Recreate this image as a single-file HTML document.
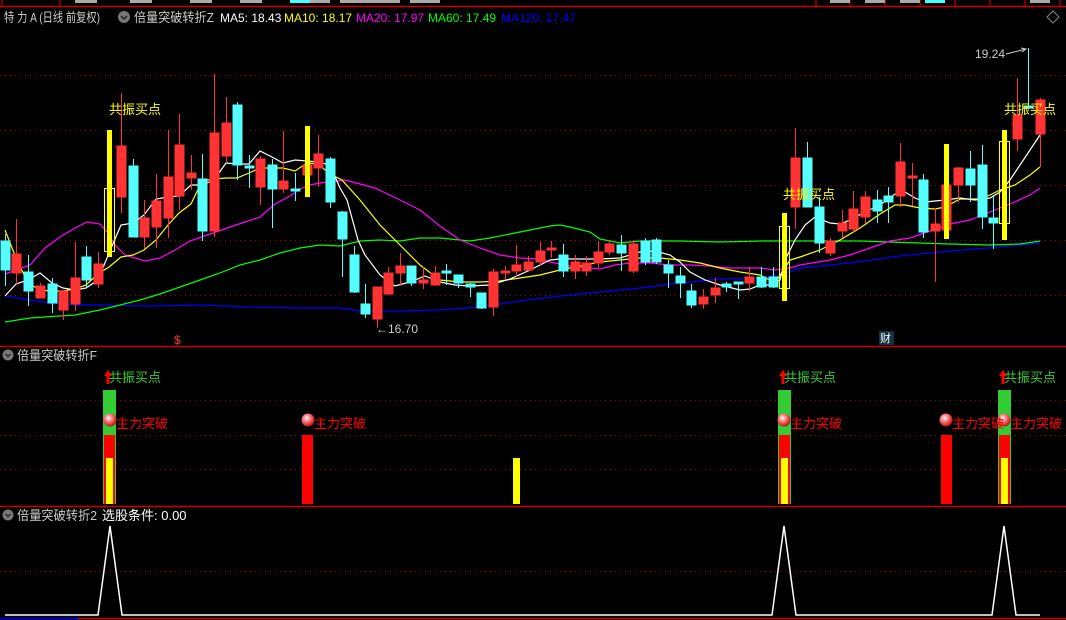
<!DOCTYPE html>
<html><head><meta charset="utf-8"><style>
html,body{margin:0;padding:0;background:#000;width:1066px;height:620px;overflow:hidden}
svg{display:block}
text{font-family:"Liberation Sans","Noto Sans CJK SC",sans-serif}
</style></head><body>
<svg width="1066" height="620" viewBox="0 0 1066 620" xmlns="http://www.w3.org/2000/svg">
<rect width="1066" height="620" fill="#000"/>
<line x1="0" y1="6.5" x2="1066" y2="6.5" stroke="#c00" stroke-width="1.5"/>
<g stroke="#c00" stroke-width="1.2">
<line x1="2" y1="0" x2="2" y2="6"/><line x1="60" y1="0" x2="60" y2="6"/>
<line x1="816" y1="0" x2="816" y2="6"/><line x1="850" y1="0" x2="850" y2="6"/><line x1="885" y1="0" x2="885" y2="6"/><line x1="920" y1="0" x2="920" y2="6"/><line x1="955" y1="0" x2="955" y2="6"/><line x1="990" y1="0" x2="990" y2="6"/><line x1="1025" y1="0" x2="1025" y2="6"/><line x1="1060" y1="0" x2="1060" y2="6"/>
</g>
<g fill="#aaa"><rect x="75" y="0" width="22" height="3"/><rect x="130" y="0" width="22" height="3"/><rect x="190" y="0" width="22" height="3"/><rect x="240" y="0" width="22" height="3"/><rect x="300" y="0" width="30" height="3"/><rect x="340" y="0" width="60" height="3"/><rect x="410" y="0" width="30" height="3"/><rect x="830" y="0" width="20" height="3"/><rect x="865" y="0" width="20" height="3"/><rect x="900" y="0" width="20" height="3"/><rect x="1030" y="0" width="20" height="3"/></g>
<rect x="290" y="0" width="20" height="3" fill="#4ff"/><rect x="925" y="0" width="20" height="3" fill="#4ff"/>

<text x="4" y="22" font-size="13" fill="#ccc" textLength="96" lengthAdjust="spacingAndGlyphs">特 力 A (日线 前复权)</text>
<circle cx="124" cy="17" r="6" fill="#777"/><path d="M121 16l3 3 3-3" stroke="#222" stroke-width="1.5" fill="none"/>
<text x="134" y="22" font-size="13" fill="#ccc" textLength="80" lengthAdjust="spacingAndGlyphs">倍量突破转折Z</text>
<text x="220" y="22" font-size="12" fill="#fff">MA5: 18.43</text>
<text x="284" y="22" font-size="12" fill="#ff0">MA10: 18.17</text>
<text x="356" y="22" font-size="12" fill="#f0f">MA20: 17.97</text>
<text x="428" y="22" font-size="12" fill="#0f0">MA60: 17.49</text>
<text x="501" y="22" font-size="12" fill="#00f">MA120: 17.47</text>
<path d="M1053 11l6 6-6 6-6-6z" stroke="#888" fill="none"/>

<g stroke="#a00" stroke-dasharray="1,4" stroke-width="1">
<line x1="0" y1="75.5" x2="1066" y2="75.5"/><line x1="0" y1="130.5" x2="1066" y2="130.5"/><line x1="0" y1="185.5" x2="1066" y2="185.5"/><line x1="0" y1="240.5" x2="1066" y2="240.5"/><line x1="0" y1="295.5" x2="1066" y2="295.5"/>
<line x1="0" y1="400.5" x2="1066" y2="400.5"/><line x1="0" y1="435.5" x2="1066" y2="435.5"/><line x1="0" y1="469.5" x2="1066" y2="469.5"/>
<line x1="0" y1="571.5" x2="1066" y2="571.5"/>
</g>
<line x1="0" y1="346.5" x2="1066" y2="346.5" stroke="#c00" stroke-width="1.5"/>
<line x1="0" y1="506.5" x2="1066" y2="506.5" stroke="#c00" stroke-width="1.5"/>

<g fill="none" stroke-width="1.2">
<polyline stroke="#00f" points="5,296 30,300 50,303 80,305 100,305 150,306 200,305 250,307 300,308 340,308 360,311 400,311 440,310 480,307 520,301 560,296 600,292 640,288 680,283 720,279 760,278 780,275 800,268 850,263 900,256 950,251 1000,247 1040,243"/>
<polyline stroke="#0f0" points="5,322 30,318 60,316 75,315 100,310 120,305 140,300 160,294 180,287 200,280 220,273 240,265 260,260 280,253 300,248 320,245 340,246 360,241 380,240 400,241 420,238 440,238 470,241 490,238 510,234 530,230 550,226 560,225 570,227 590,232 600,239 620,243 640,241 680,241 720,242 760,241 790,241 830,241 860,241 890,242 920,243 950,244 990,245 1020,244 1040,241"/>
<polyline stroke="#f0f" points="5,274 30,265 45,248 60,237 75,228 87,222 100,224 108,233 115,245 125,255 145,261 160,258 175,250 190,241 210,234 230,227 245,222 260,217 275,204 290,196 300,189 310,185 320,183 345,180 375,188 400,200 420,210 440,226 460,240 480,248 500,255 520,258 540,259 550,262 570,266 590,268 600,269 615,265 630,263 650,263 670,265 690,265 710,266 730,268 760,268 775,270 790,268 800,265 830,260 850,255 870,248 890,241 910,238 930,231 950,224 970,220 990,212 1010,204 1030,195 1040,188"/>
<polyline stroke="#ff0" points="5,230 16,258 28,283 40,290 52,291 63,291 75,289 86,285 98,274 109,267 121,257 133,255 144,250 156,240 168,225 179,213 191,204 202,181 214,179 226,178 237,178 249,173 260,168 272,168 283,168 295,171 307,163 318,164 330,174 342,180 360,200 380,225 400,245 420,265 440,280 460,282 480,282 500,281 520,278 540,275 560,270 580,266 600,262 620,260 640,258 660,258 680,260 700,263 720,268 740,272 760,275 775,283 790,260 800,257 820,250 840,240 860,228 880,214 895,205 905,205 920,208 935,209 945,207 960,199 980,199 990,195 1000,190 1015,185 1030,175 1040,167"/>
<polyline stroke="#fff" points="5,296 16,284 28,280 40,273 52,283 63,288 75,290 86,288 98,280 109,253 121,225 133,223 144,215 156,199 168,197 179,196 191,185 202,185 214,180 226,163 237,164 249,164 260,151 272,157 283,163 295,160 307,161 318,162 330,165 340,188 347,200 358,240 365,255 380,275 395,286 410,282 425,276 440,282 455,285 470,286 490,285 510,279 530,270 550,260 560,259 600,259 620,258 640,252 655,251 670,255 680,262 690,272 705,280 720,285 740,290 750,289 760,285 770,285 780,280 785,260 795,240 805,225 815,217 830,223 840,224 850,220 865,212 880,205 895,194 905,192 915,198 925,202 935,201 945,200 960,198 975,200 990,198 1000,192 1010,180 1020,165 1030,150 1040,135"/>
</g>

<g stroke="#f33" fill="#f33" stroke-width="1">
<line x1="16.5" y1="219" x2="16.5" y2="285"/><rect x="12" y="254" width="9" height="19"/>
<line x1="40.5" y1="283" x2="40.5" y2="298"/><rect x="36" y="286" width="9" height="12"/>
<line x1="63.5" y1="291" x2="63.5" y2="320"/><rect x="59" y="291" width="9" height="19"/>
<line x1="75.5" y1="242" x2="75.5" y2="311"/><rect x="71" y="278" width="9" height="26"/>
<line x1="98.5" y1="252" x2="98.5" y2="288"/><rect x="94" y="264" width="9" height="20"/>
<line x1="121.5" y1="93" x2="121.5" y2="213"/><rect x="117" y="146" width="9" height="51"/>
<line x1="144.5" y1="200" x2="144.5" y2="249"/><rect x="140" y="218" width="9" height="19"/>
<line x1="156.5" y1="174" x2="156.5" y2="248"/><rect x="152" y="201" width="9" height="26"/>
<line x1="168.5" y1="130" x2="168.5" y2="238"/><rect x="164" y="177" width="9" height="41"/>
<line x1="179.5" y1="114" x2="179.5" y2="210"/><rect x="175" y="145" width="9" height="51"/>
<line x1="191.5" y1="155" x2="191.5" y2="190"/><rect x="187" y="173" width="9" height="5"/>
<line x1="214.5" y1="74" x2="214.5" y2="237"/><rect x="210" y="133" width="9" height="98"/>
<line x1="226.5" y1="97" x2="226.5" y2="162"/><rect x="222" y="123" width="9" height="33"/>
<line x1="260.5" y1="156" x2="260.5" y2="205"/><rect x="256" y="159" width="9" height="28"/>
<line x1="283.5" y1="131" x2="283.5" y2="193"/><rect x="279" y="181" width="9" height="8"/>
<line x1="307.5" y1="150" x2="307.5" y2="190"/><rect x="303" y="165" width="9" height="10"/>
<line x1="318.5" y1="135" x2="318.5" y2="187"/><rect x="314" y="154" width="9" height="14"/>
<line x1="377.5" y1="287" x2="377.5" y2="328"/><rect x="373" y="287" width="9" height="32"/>
<line x1="388.5" y1="267" x2="388.5" y2="295"/><rect x="384" y="273" width="9" height="21"/>
<line x1="400.5" y1="253" x2="400.5" y2="286"/><rect x="396" y="266" width="9" height="7"/>
<line x1="423.5" y1="267" x2="423.5" y2="289"/><rect x="419" y="280" width="9" height="3"/>
<line x1="435.5" y1="266" x2="435.5" y2="286"/><rect x="431" y="273" width="9" height="12"/>
<line x1="493.5" y1="269" x2="493.5" y2="316"/><rect x="489" y="272" width="9" height="35"/>
<line x1="505.5" y1="266" x2="505.5" y2="280"/><rect x="501" y="271" width="9" height="2"/>
<line x1="516.5" y1="245" x2="516.5" y2="277"/><rect x="512" y="265" width="9" height="6"/>
<line x1="528.5" y1="256" x2="528.5" y2="272"/><rect x="524" y="262" width="9" height="8"/>
<line x1="540.5" y1="242" x2="540.5" y2="265"/><rect x="536" y="251" width="9" height="11"/>
<line x1="551.5" y1="241" x2="551.5" y2="258"/><rect x="547" y="248" width="9" height="2"/>
<line x1="575.5" y1="255" x2="575.5" y2="279"/><rect x="571" y="262" width="9" height="9"/>
<line x1="586.5" y1="256" x2="586.5" y2="276"/><rect x="582" y="263" width="9" height="8"/>
<line x1="598.5" y1="241" x2="598.5" y2="268"/><rect x="594" y="252" width="9" height="11"/>
<line x1="609.5" y1="241" x2="609.5" y2="255"/><rect x="605" y="244" width="9" height="8"/>
<line x1="633.5" y1="240" x2="633.5" y2="273"/><rect x="629" y="244" width="9" height="27"/>
<line x1="703.5" y1="289" x2="703.5" y2="309"/><rect x="699" y="297" width="9" height="7"/>
<line x1="715.5" y1="278" x2="715.5" y2="303"/><rect x="711" y="288" width="9" height="7"/>
<line x1="749.5" y1="267" x2="749.5" y2="291"/><rect x="745" y="277" width="9" height="6"/>
<line x1="795.5" y1="128" x2="795.5" y2="229"/><rect x="791" y="158" width="9" height="49"/>
<line x1="830.5" y1="238" x2="830.5" y2="256"/><rect x="826" y="241" width="9" height="12"/>
<line x1="842.5" y1="210" x2="842.5" y2="238"/><rect x="838" y="223" width="9" height="8"/>
<line x1="853.5" y1="191" x2="853.5" y2="232"/><rect x="849" y="209" width="9" height="20"/>
<line x1="865.5" y1="191" x2="865.5" y2="223"/><rect x="861" y="197" width="9" height="20"/>
<line x1="900.5" y1="143" x2="900.5" y2="207"/><rect x="896" y="162" width="9" height="34"/>
<line x1="912.5" y1="163" x2="912.5" y2="206"/><rect x="908" y="176" width="9" height="2"/>
<line x1="935.5" y1="208" x2="935.5" y2="282"/><rect x="931" y="224" width="9" height="7"/>
<rect x="942" y="185" width="9" height="45"/>
<line x1="958.5" y1="167" x2="958.5" y2="202"/><rect x="954" y="168" width="9" height="17"/>
<line x1="1017.5" y1="78" x2="1017.5" y2="151"/><rect x="1013" y="115" width="9" height="24"/>
<line x1="1040.5" y1="98" x2="1040.5" y2="167"/><rect x="1036" y="100" width="9" height="34"/>
</g>
<g stroke="#5ff" fill="#5ff" stroke-width="1">
<line x1="5.5" y1="234" x2="5.5" y2="286"/><rect x="1" y="241" width="9" height="29"/>
<line x1="28.5" y1="255" x2="28.5" y2="306"/><rect x="24" y="272" width="9" height="19"/>
<line x1="52.5" y1="278" x2="52.5" y2="313"/><rect x="48" y="284" width="9" height="19"/>
<line x1="86.5" y1="246" x2="86.5" y2="288"/><rect x="82" y="257" width="9" height="23"/>
<line x1="133.5" y1="159" x2="133.5" y2="237"/><rect x="129" y="166" width="9" height="71"/>
<line x1="202.5" y1="154" x2="202.5" y2="241"/><rect x="198" y="179" width="9" height="52"/>
<line x1="237.5" y1="102" x2="237.5" y2="180"/><rect x="233" y="105" width="9" height="60"/>
<line x1="249.5" y1="155" x2="249.5" y2="188"/><rect x="245" y="166" width="9" height="2"/>
<line x1="272.5" y1="159" x2="272.5" y2="228"/><rect x="268" y="165" width="9" height="24"/>
<line x1="295.5" y1="173" x2="295.5" y2="201"/><rect x="291" y="189" width="9" height="2"/>
<line x1="330.5" y1="157" x2="330.5" y2="208"/><rect x="326" y="159" width="9" height="43"/>
<line x1="342.5" y1="211" x2="342.5" y2="277"/><rect x="338" y="212" width="9" height="27"/>
<line x1="354.5" y1="246" x2="354.5" y2="293"/><rect x="350" y="255" width="9" height="37"/>
<line x1="365.5" y1="284" x2="365.5" y2="318"/><rect x="361" y="304" width="9" height="10"/>
<line x1="411.5" y1="266" x2="411.5" y2="286"/><rect x="407" y="266" width="9" height="17"/>
<line x1="446.5" y1="264" x2="446.5" y2="285"/><rect x="442" y="271" width="9" height="2"/>
<line x1="458.5" y1="275" x2="458.5" y2="288"/><rect x="454" y="275" width="9" height="8"/>
<line x1="470.5" y1="283" x2="470.5" y2="297"/><rect x="466" y="284" width="9" height="3"/>
<line x1="481.5" y1="293" x2="481.5" y2="309"/><rect x="477" y="293" width="9" height="15"/>
<line x1="563.5" y1="244" x2="563.5" y2="277"/><rect x="559" y="255" width="9" height="16"/>
<line x1="621.5" y1="235" x2="621.5" y2="271"/><rect x="617" y="245" width="9" height="8"/>
<line x1="645.5" y1="238" x2="645.5" y2="265"/><rect x="641" y="241" width="9" height="21"/>
<line x1="656.5" y1="238" x2="656.5" y2="264"/><rect x="652" y="240" width="9" height="22"/>
<line x1="668.5" y1="260" x2="668.5" y2="288"/><rect x="664" y="265" width="9" height="8"/>
<line x1="680.5" y1="267" x2="680.5" y2="298"/><rect x="676" y="276" width="9" height="7"/>
<line x1="691.5" y1="284" x2="691.5" y2="308"/><rect x="687" y="291" width="9" height="14"/>
<line x1="726.5" y1="282" x2="726.5" y2="292"/><rect x="722" y="284" width="9" height="3"/>
<line x1="738.5" y1="282" x2="738.5" y2="299"/><rect x="734" y="282" width="9" height="2"/>
<line x1="761.5" y1="267" x2="761.5" y2="288"/><rect x="757" y="277" width="9" height="10"/>
<line x1="773.5" y1="267" x2="773.5" y2="288"/><rect x="769" y="277" width="9" height="10"/>
<line x1="807.5" y1="142" x2="807.5" y2="207"/><rect x="803" y="158" width="9" height="49"/>
<line x1="819.5" y1="197" x2="819.5" y2="253"/><rect x="815" y="207" width="9" height="36"/>
<line x1="877.5" y1="190" x2="877.5" y2="223"/><rect x="873" y="200" width="9" height="11"/>
<line x1="888.5" y1="187" x2="888.5" y2="223"/><rect x="884" y="196" width="9" height="6"/>
<line x1="923.5" y1="174" x2="923.5" y2="238"/><rect x="919" y="180" width="9" height="52"/>
<line x1="970.5" y1="151" x2="970.5" y2="202"/><rect x="966" y="169" width="9" height="16"/>
<line x1="982.5" y1="145" x2="982.5" y2="229"/><rect x="978" y="165" width="9" height="52"/>
<line x1="993.5" y1="195" x2="993.5" y2="249"/><rect x="989" y="218" width="9" height="5"/>
<line x1="1028.5" y1="48" x2="1028.5" y2="108"/><rect x="1024" y="106" width="9" height="2"/>
</g>
<g fill="#ff0">
<rect x="107" y="130" width="5" height="127"/><rect x="305" y="126" width="5" height="71"/>
<rect x="782" y="213" width="5" height="88"/><rect x="944" y="144" width="5" height="95"/>
<rect x="1002" y="130" width="5" height="110"/>
</g>
<g fill="none" stroke="#ff0" stroke-width="1">
<rect x="104.5" y="188.5" width="10" height="63"/><rect x="779.5" y="226.5" width="10" height="62"/><rect x="999.5" y="141.5" width="10" height="82"/>
</g>
<g font-size="13" fill="#ff0">
<text x="109" y="114">共振买点</text><text x="783" y="199">共振买点</text><text x="1004" y="114">共振买点</text>
</g>
<text x="376" y="333" font-size="12" fill="#ccc">←16.70</text>
<text x="975" y="58" font-size="12" fill="#ccc">19.24</text>
<path d="M1006 54l20-5m-5-1l5 1-4 3" stroke="#ccc" fill="none"/>
<text x="174" y="344" font-size="12" fill="#f33">$</text>
<rect x="879" y="331" width="15" height="14" fill="#134"/>
<text x="880" y="342" font-size="11" fill="#fff">财</text>

<circle cx="8" cy="355" r="5.5" fill="#777"/><path d="M5.5 354l2.5 2.5 2.5-2.5" stroke="#222" stroke-width="1.3" fill="none"/>
<text x="17" y="360" font-size="13" fill="#ccc" textLength="80" lengthAdjust="spacingAndGlyphs">倍量突破转折F</text>
<rect x="103" y="390" width="13" height="114" fill="#3c3"/><rect x="104" y="435" width="11" height="69" fill="#f00"/><rect x="106" y="458" width="7" height="46" fill="#ff0"/>
<rect x="778" y="390" width="13" height="114" fill="#3c3"/><rect x="779" y="435" width="11" height="69" fill="#f00"/><rect x="781" y="458" width="7" height="46" fill="#ff0"/>
<rect x="998" y="390" width="13" height="114" fill="#3c3"/><rect x="999" y="435" width="11" height="69" fill="#f00"/><rect x="1001" y="458" width="7" height="46" fill="#ff0"/>
<rect x="302" y="435" width="11" height="69" fill="#f00"/>
<rect x="941" y="435" width="11" height="69" fill="#f00"/>
<rect x="513" y="458" width="7" height="46" fill="#ff0"/>
<g fill="#f00"><path d="M104 376l4-6 4 6h-2.5v8h-3v-8z"/><path d="M779 376l4-6 4 6h-2.5v8h-3v-8z"/><path d="M999 376l4-6 4 6h-2.5v8h-3v-8z"/></g>
<g font-size="13" fill="#3c3"><text x="109" y="382">共振买点</text><text x="784" y="382">共振买点</text><text x="1004" y="382">共振买点</text></g>
<defs><radialGradient id="b" cx="0.4" cy="0.35" r="0.7"><stop offset="0" stop-color="#fff"/><stop offset="0.35" stop-color="#f88"/><stop offset="1" stop-color="#b00"/></radialGradient></defs>
<g fill="url(#b)"><circle cx="110" cy="420" r="6.5"/><circle cx="308" cy="420" r="6.5"/><circle cx="784" cy="420" r="6.5"/><circle cx="946" cy="420" r="6.5"/><circle cx="1004" cy="420" r="6.5"/></g>
<g font-size="13" fill="#f00"><text x="116" y="428">主力突破</text><text x="314" y="428">主力突破</text><text x="790" y="428">主力突破</text><text x="952" y="428">主力突破</text><text x="1010" y="428">主力突破</text></g>

<circle cx="8" cy="515" r="5.5" fill="#777"/><path d="M5.5 514l2.5 2.5 2.5-2.5" stroke="#222" stroke-width="1.3" fill="none"/>
<text x="17" y="520" font-size="13" fill="#ccc" textLength="80" lengthAdjust="spacingAndGlyphs">倍量突破转折2</text>
<text x="102" y="520" font-size="13" fill="#fff">选股条件: 0.00</text>
<polyline fill="none" stroke="#fff" stroke-width="1.5" points="5,615 98,615 110,526 122,615 772,615 784,526 796,615 992,615 1004,526 1016,615 1040,615"/>
<line x1="0" y1="618.5" x2="1066" y2="618.5" stroke="#c00" stroke-width="1.5"/>
<line x1="0" y1="618.5" x2="78" y2="618.5" stroke="#00c" stroke-width="2"/>
</svg>
</body></html>
